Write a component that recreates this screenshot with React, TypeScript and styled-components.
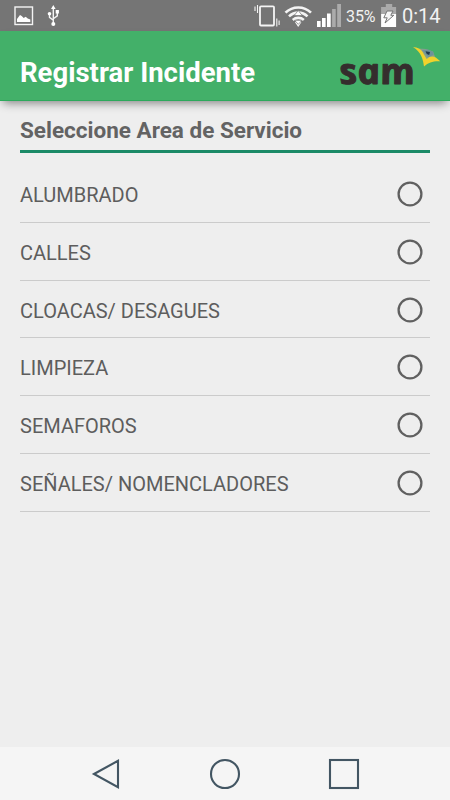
import React from "react";
import styled, { createGlobalStyle } from "styled-components";

const GlobalStyle = createGlobalStyle`
  html, body { margin: 0; padding: 0; }
  * { box-sizing: border-box; }
  body { font-family: Roboto, sans-serif; background: #eeeeee; }
  svg { display: block; flex: none; overflow: visible; }
`;

const Screen = styled.div`
  width: 450px;
  height: 800px;
  display: flex;
  flex-direction: column;
  overflow: hidden;
  background: #eeeeee;
`;

const StatusBar = styled.header`
  height: 31px;
  flex: none;
  display: flex;
  justify-content: space-between;
  background: #757575;
  color: #f2f2f2;
`;

const StatusGroup = styled.div`
  display: flex;
  align-items: center;
`;

const Battery = styled.span`
  width: 35px;
  margin-left: 4px;
  font-size: 16px;
  line-height: 31px;
  letter-spacing: -0.1px;
  white-space: nowrap;
  padding-top: 2px;
`;

const Clock = styled.time`
  width: 53px;
  padding-left: 5px;
  padding-top: 2px;
  font-size: 20px;
  line-height: 31px;
  white-space: nowrap;
`;

const AppBar = styled.div`
  height: 70px;
  flex: none;
  display: flex;
  justify-content: space-between;
  background: #43b069;
  border-bottom: 1px solid #2da95c;
  box-shadow: 0 5px 9px -3px rgba(0, 0, 0, 0.45);
`;

const Title = styled.h1`
  margin: 0;
  padding: 26px 0 0 20px;
  font-size: 27.5px;
  line-height: 32px;
  font-weight: 700;
  color: #ffffff;
  white-space: nowrap;
`;

const Main = styled.main`
  flex: 1;
  padding: 0 20px;
`;

const Heading = styled.h2`
  height: 52px;
  margin: 0 0 12.1px;
  padding-top: 15px;
  border-bottom: 3px solid #1b8a67;
  font-size: 22.5px;
  line-height: 28px;
  font-weight: 700;
  color: #636363;
  white-space: nowrap;
`;

const List = styled.ul`
  list-style: none;
  margin: 0;
  padding: 0;
`;

const Row = styled.li`
  height: 57.8px;
  display: flex;
  align-items: center;
  justify-content: space-between;
  padding: 1px 7px 0 0;
  border-bottom: 1px solid #cbcbcb;
  color: #5d5d5d;
`;

const Label = styled.span`
  padding-top: 2px;
  font-size: 20px;
  line-height: 24px;
`;

const Radio = styled.span`
  width: 26px;
  height: 26px;
  flex: none;
`;

const NavBar = styled.nav`
  height: 53px;
  flex: none;
  display: flex;
  justify-content: space-between;
  align-items: center;
  padding: 0 90px 0 92px;
  background: #f5f5f5;
`;

const areas = [
  "ALUMBRADO",
  "CALLES",
  "CLOACAS/ DESAGUES",
  "LIMPIEZA",
  "SEMAFOROS",
  "SEÑALES/ NOMENCLADORES",
];

const NotificationIcons = () => (
  <svg width="70" height="31" viewBox="0 0 70 31" fill="none">
    <rect x="15" y="7" width="17.5" height="17.5" stroke="#f4f4f4" strokeWidth="1.4" />
    <path d="M17 22v-3l3-4 1.7 1 2 2 2-1.2 2 1.8 2.6 1v2.4z" fill="#fff" />
    <g stroke="#f4f4f4" strokeWidth="1.4">
      <path d="M53.3 8v16M49.5 14v3.3l3.8 3M57.3 12.5v3.3l-4 3" />
    </g>
    <path d="M53.3 5l2.3 4H51zM55.7 10h3.2v3.5h-3.2z" fill="#fff" />
    <circle cx="49.5" cy="13.7" r="1.8" fill="#fff" />
    <circle cx="53.3" cy="24" r="2" fill="#fff" />
  </svg>
);

const SignalIcons = () => (
  <svg width="90" height="31" viewBox="252 0 90 31" fill="none">
    <rect x="260" y="6.3" width="14" height="19.2" rx="1" stroke="#f4f4f4" strokeWidth="1.8" />
    <path d="M257.5 5v8M255 6.5v4.5M276.8 18.5v8M279.1 20.5v4.5" stroke="#f4f4f4" strokeWidth="1.1" />
    <path
      d="M285.5 12.7C292.5 5.7 304 5.7 311 12.7M289 16.4c5.3-5 13.2-5 18.5 0M292.8 20c3-2.8 8-2.8 11 0"
      stroke="#f4f4f4"
      strokeWidth="2.6"
    />
    <path d="M295 22.200q3.200-2 6.400 0l-3.200 4.800z" fill="#f4f4f4" />
    <path d="M298.200 10.500l4 5h-8zM294.600 20.300h7.400l-3.700 4z" fill="#fff" stroke="#757575" strokeWidth=".7" />
    <path d="M317 21h3.600v6H317zM322 18h3.600v9H322zM327 13.500h3.700V27H327z" fill="#fff" />
    <path d="M332.100 9h3.600v18h-3.600zM337.200 4h3.800v23h-3.800z" fill="#ababab" />
  </svg>
);

const BatteryIcon = () => (
  <svg width="16" height="31" viewBox="381 0 16 31">
    <path d="M385.8 4h6.4v3h3.9v7.5h-15V7h4.7z" fill="#a9a9a9" />
    <path d="M381.1 14h15v13h-15z" fill="#fff" />
    <path d="M387 11h6l-2.2 4.3h3L385 23l2.2-5.2h-3.4z" fill="#f5f5f5" stroke="#757575" strokeWidth="1" />
  </svg>
);

const Logo = () => (
  <svg width="115" height="69" viewBox="335 31 115 69">
    <text
      transform="translate(341.5 83.6) skewX(12)"
      fontFamily="Open Sans, sans-serif"
      fontWeight="700"
      fontStyle="italic"
      fontSize="36"
      textLength="75.5"
      lengthAdjust="spacingAndGlyphs"
      fill="#352d2d"
      stroke="#352d2d"
      strokeWidth="1"
      strokeLinejoin="round"
    >
      sam
    </text>
    <path d="M419 48.5l7 .5 7 2.5 2.2 5.8-4.7.8-4.5 3.4-3-8z" fill="#86a08c" />
    <path d="M422 50l6-.5 5 2.2.8 2.8-5.3 2.8z" fill="#6e929a" />
    <path d="M425.500 51.200l4.500.8-.8 3-2.400-1z" fill="#20384c" />
    <path
      d="M413 47c4.500.4 8 1.800 9.600 5l4 7c3.200-3 6.500-3.200 9.200-1.500l4.500 3.800c-7-.4-11.500 1-16.300 5.200-1-7.500-2.700-14-11-19.500z"
      fill="#f1d22c"
    />
  </svg>
);

export default function App() {
  return (
    <Screen>
      <GlobalStyle />
      <StatusBar>
        <StatusGroup>
          <NotificationIcons />
        </StatusGroup>
        <StatusGroup>
          <SignalIcons />
          <Battery>35%</Battery>
          <BatteryIcon />
          <Clock>0:14</Clock>
        </StatusGroup>
      </StatusBar>
      <AppBar>
        <Title>Registrar Incidente</Title>
        <Logo />
      </AppBar>
      <Main>
        <Heading>Seleccione Area de Servicio</Heading>
        <List>
          {areas.map((area) => (
            <Row key={area}>
              <Label>{area}</Label>
              <Radio>
                <svg width="26" height="26" viewBox="0 0 26 26">
                  <circle cx="13" cy="13" r="11.4" fill="none" stroke="#606060" strokeWidth="2.3" />
                </svg>
              </Radio>
            </Row>
          ))}
        </List>
      </Main>
      <NavBar>
        <svg width="29" height="32" viewBox="0 0 29 32">
          <path d="M2 16L26 2.8v26.4z" fill="none" stroke="#435663" strokeWidth="2.1" />
        </svg>
        <svg width="32" height="32" viewBox="0 0 32 32">
          <circle cx="16" cy="16" r="14" fill="none" stroke="#435663" strokeWidth="2.1" />
        </svg>
        <svg width="32" height="32" viewBox="0 0 32 32">
          <rect x="2" y="2" width="28" height="28" fill="none" stroke="#435663" strokeWidth="2.1" />
        </svg>
      </NavBar>
    </Screen>
  );
}
